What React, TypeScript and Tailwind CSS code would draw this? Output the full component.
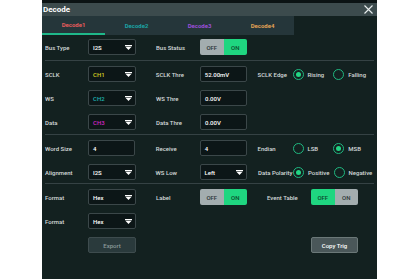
import React from "react";

const LABEL = "text-[6px] font-medium text-[#d3dada]";

function Arrow() {
  return (
    <svg width="7" height="5" viewBox="0 0 7 5" className="fill-white">
      <rect x="0" y="0" width="7" height="1.2" />
      <path d="M0.4 1.8 L6.6 1.8 L3.5 5 Z" />
    </svg>
  );
}

function Select({ value, color = "text-white" }: { value: string; color?: string }) {
  return (
    <div className="flex h-4 w-[48px] items-center justify-between rounded-[2px] border border-[#3b4749] bg-[#0c1617] pl-[4px] pr-[3px]">
      <span className={`text-[6px] font-medium ${color}`}>{value}</span>
      <Arrow />
    </div>
  );
}

function Input({ value }: { value: string }) {
  return (
    <div className="flex h-4 w-[47px] items-center rounded-[2px] border border-[#3b4749] bg-[#0c1617] pl-[4px]">
      <span className="text-[6px] font-medium text-white">{value}</span>
    </div>
  );
}

function Toggle({ on }: { on: "off" | "on" }) {
  const green = "bg-[#1fd680] text-[#0d4a2c]";
  const gray = "bg-[#a3adaf] text-[#2c3636]";
  return (
    <div className="flex h-4 w-[47px] overflow-hidden rounded-[2px] text-[6px] font-medium">
      <div className={`flex flex-1 items-center justify-center ${on === "off" ? green : gray}`}>OFF</div>
      <div className={`flex flex-1 items-center justify-center ${on === "on" ? green : gray}`}>ON</div>
    </div>
  );
}

function Radio({ label, checked }: { label: string; checked?: boolean }) {
  return (
    <div className="flex w-[41px] items-center gap-[4px]">
      <div className="flex h-[11px] w-[11px] shrink-0 items-center justify-center rounded-full border-[1.5px] border-[#1fb880]">
        {checked && <div className="h-[5px] w-[5px] rounded-full bg-[#22d684]" />}
      </div>
      <span className={LABEL}>{label}</span>
    </div>
  );
}

function Row({ children }: { children: React.ReactNode }) {
  return <div className="flex h-4 items-center">{children}</div>;
}

function L1({ t }: { t: string }) {
  return <span className={`${LABEL} w-[43px] shrink-0`}>{t}</span>;
}
function L2({ t }: { t: string }) {
  return <span className={`${LABEL} ml-[20px] w-[44px] shrink-0`}>{t}</span>;
}
function L3({ t }: { t: string }) {
  return <span className={`${LABEL} ml-[11px] w-[35px] shrink-0 whitespace-nowrap`}>{t}</span>;
}

const Sep = () => <div className="h-px bg-[#354244]" />;

export default function App() {
  const tabs = [
    { t: "Decode1", c: "text-[#e35b5b]", active: true },
    { t: "Decode2", c: "text-[#1ba3a3]" },
    { t: "Decode3", c: "text-[#9a4fd8]" },
    { t: "Decode4", c: "text-[#e0a255]" },
  ];

  return (
    <div className="h-[280px] w-[420px] bg-white font-['Roboto','Liberation_Sans',sans-serif]">
      <div className="ml-[42px] flex h-[279px] w-[335px] flex-col overflow-hidden border-t-[3px] border-[#0b1314] bg-[#132120]">
        <div className="flex h-[13px] items-center justify-between bg-[#3c4b4d] pl-[1px] pr-[4px]">
          <span className="text-[8px] font-bold text-white">Decode</span>
          <svg width="9" height="9" viewBox="0 0 9 9" className="stroke-[#e8eeee]" strokeWidth="1.1">
            <path d="M0.5 0.5 L8.5 8.5 M8.5 0.5 L0.5 8.5" />
          </svg>
        </div>

        <div className="flex h-[19px]">
          <div className="flex w-[252px] bg-[#25363a]">
            {tabs.map((tab) => (
              <div
                key={tab.t}
                className={`flex w-[63px] items-center justify-center text-[6px] font-bold ${tab.c} ${
                  tab.active ? "border-b-2 border-[#1fb88a]" : ""
                }`}
              >
                {tab.t}
              </div>
            ))}
          </div>
        </div>

        <div className="flex flex-col px-[3px]">
          <div className="pb-[5px] pt-[4px]">
            <Row>
              <L1 t="Bus Type" />
              <Select value="I2S" />
              <L2 t="Bus Status" />
              <Toggle on="on" />
            </Row>
          </div>
          <Sep />

          <div className="flex flex-col gap-2 pb-[4px] pt-[5px]">
            <Row>
              <L1 t="SCLK" />
              <Select value="CH1" color="text-[#d6cf22]" />
              <L2 t="SCLK Thre" />
              <Input value="52.00mV" />
              <L3 t="SCLK Edge" />
              <Radio label="Rising" checked />
              <Radio label="Falling" />
            </Row>
            <Row>
              <L1 t="WS" />
              <Select value="CH2" color="text-[#1fb2b2]" />
              <L2 t="WS Thre" />
              <Input value="0.00V" />
            </Row>
            <Row>
              <L1 t="Data" />
              <Select value="CH3" color="text-[#d424c4]" />
              <L2 t="Data Thre" />
              <Input value="0.00V" />
            </Row>
          </div>
          <Sep />

          <div className="flex flex-col gap-2 pb-[3px] pt-[5px]">
            <Row>
              <L1 t="Word Size" />
              <Input value="4" />
              <span className={`${LABEL} ml-[21px] w-[44px] shrink-0`}>Receive</span>
              <Input value="4" />
              <L3 t="Endian" />
              <Radio label="LSB" />
              <Radio label="MSB" checked />
            </Row>
            <Row>
              <L1 t="Alignment" />
              <Select value="I2S" />
              <L2 t="WS Low" />
              <Select value="Left" />
              <L3 t="Data Polarity" />
              <Radio label="Positive" checked />
              <Radio label="Negative" />
            </Row>
          </div>
          <Sep />

          <div className="flex flex-col gap-2 pt-[5px]">
            <Row>
              <L1 t="Format" />
              <Select value="Hex" />
              <L2 t="Label" />
              <Toggle on="on" />
              <span className={`${LABEL} ml-[20px] w-[44px] shrink-0`}>Event Table</span>
              <Toggle on="off" />
            </Row>
            <Row>
              <L1 t="Format" />
              <Select value="Hex" />
            </Row>
            <Row>
              <div className="ml-[43px] flex h-4 w-[48px] items-center justify-center rounded-[2px] border border-[#3e4c4e] bg-[#2a3a3c] text-[6px] font-medium text-[#8c9a9b]">
                Export
              </div>
              <div className="ml-[175px] flex h-4 w-[47px] items-center justify-center rounded-[2px] border border-[#6b7878] bg-[#4a5759] text-[6px] font-medium text-white">
                Copy Trig
              </div>
            </Row>
          </div>
        </div>
      </div>
    </div>
  );
}
